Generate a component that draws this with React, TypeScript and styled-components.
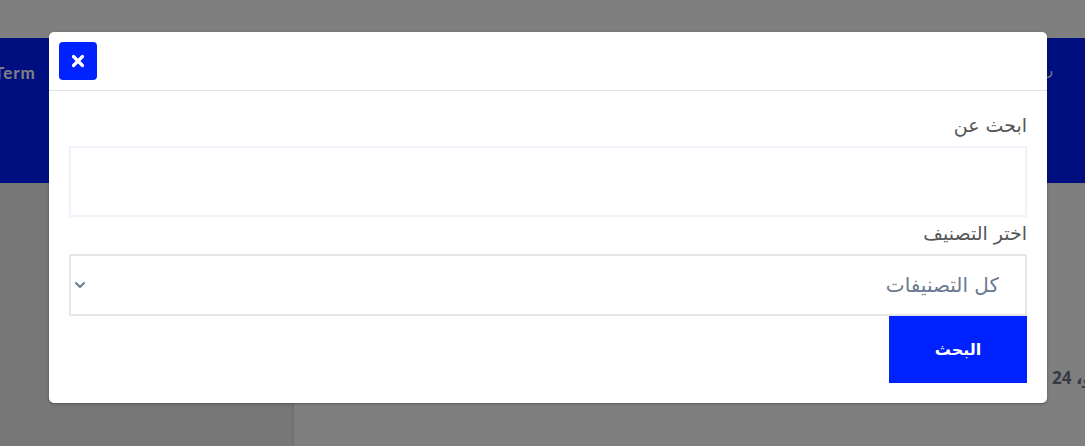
import React from 'react';
import styled, { createGlobalStyle } from 'styled-components';

const GlobalStyle = createGlobalStyle`
  html, body { margin: 0; padding: 0; }
  body {
    width: 1085px;
    height: 446px;
    overflow: hidden;
    font-family: "DejaVu Sans", "Noto Sans", sans-serif;
    background: #fff;
  }
`;

const Page = styled.div`
  position: relative;
  width: 1085px;
  height: 446px;
  overflow: hidden;
`;

const TopStrip = styled.div`
  height: 38px;
  background: #fff;
`;

const Band = styled.div`
  height: 145px;
  background: #001eff;
  display: flex;
  justify-content: space-between;
  padding-top: 24px;
  box-sizing: border-box;
`;

const BandText = styled.span`
  font-family: Lato, "Liberation Sans", sans-serif;
  font-weight: 700;
  font-size: 17px;
  letter-spacing: 1px;
  color: #fff;
  margin-left: -6px;
`;

const BandMark = styled.span`
  font-size: 14px;
  color: #fff;
  margin-right: 32px;
`;

const Content = styled.div`
  display: flex;
  height: 263px;
`;

const Sidebar = styled.div`
  width: 292px;
  background: #eeeeee;
  border-right: 2px solid #e2e2e2;
`;

const Main = styled.div`
  flex: 1;
  display: flex;
  justify-content: flex-end;
  padding-top: 183px;
  box-sizing: border-box;
`;

const MainText = styled.span`
  font-family: "Open Sans", "DejaVu Sans", sans-serif;
  font-weight: 700;
  font-size: 17px;
  color: #6a7690;
  margin-right: -8px;
`;

const Overlay = styled.div`
  position: absolute;
  inset: 0;
  background: rgba(0, 0, 0, 0.5);
`;

const Modal = styled.div`
  position: absolute;
  top: 32px;
  left: 49px;
  width: 998px;
  background: #fff;
  border-radius: 5px;
  box-shadow: 0 1px 3px rgba(0, 0, 0, 0.3);
`;

const ModalHeader = styled.div`
  height: 59px;
  padding: 10px;
  box-sizing: border-box;
  border-bottom: 1px solid #dee2e6;
  display: flex;
  align-items: center;
`;

const CloseButton = styled.button`
  width: 38px;
  height: 38px;
  border: none;
  border-radius: 4px;
  background: #0022ff;
  display: flex;
  align-items: center;
  justify-content: center;
  padding: 0;
  cursor: pointer;
`;

const ModalBody = styled.form`
  direction: rtl;
  padding: 20px 20px 20px;
  display: flex;
  flex-direction: column;
  align-items: stretch;
`;

const Label = styled.label`
  font-size: 19px;
  line-height: 29px;
  color: #555;
  margin-bottom: 6px;
  text-align: right;
`;

const TextInput = styled.input`
  height: 71px;
  box-sizing: border-box;
  border: 2px solid #eef2fb;
  outline: none;
  font-size: 18px;
  padding: 0 20px;
  margin: 0 0 2px;
  direction: rtl;
`;

const SelectWrap = styled.div`
  position: relative;
  height: 62px;
`;

const Select = styled.select`
  width: 100%;
  height: 62px;
  box-sizing: border-box;
  border: 2px solid #e6e6e6;
  border-radius: 0;
  background: #fff;
  appearance: none;
  outline: none;
  font-family: "DejaVu Sans", "Noto Sans", sans-serif;
  font-size: 20px;
  color: #6b7a90;
  padding: 0 26px 0 40px;
  direction: rtl;
`;

const Chevron = styled.svg`
  position: absolute;
  left: 5px;
  top: 27px;
  pointer-events: none;
`;

const SubmitButton = styled.button`
  align-self: flex-start;
  width: 138px;
  height: 67px;
  border: none;
  border-radius: 0;
  background: #0022ff;
  color: #fff;
  font-family: "DejaVu Sans", "Noto Sans", sans-serif;
  font-weight: 700;
  font-size: 16px;
  cursor: pointer;
`;

export default function App() {
  return (
    <>
      <GlobalStyle />
      <Page>
        <TopStrip />
        <Band>
          <BandText>Term</BandText>
          <BandMark>ر</BandMark>
        </Band>
        <Content>
          <Sidebar />
          <Main>
            <MainText>24 ،و</MainText>
          </Main>
        </Content>
        <Overlay />
        <Modal>
          <ModalHeader>
            <CloseButton type="button" aria-label="close">
              <svg width="14" height="14" viewBox="0 0 14 14">
                <path d="M2.5 2.5 L11.5 11.5 M11.5 2.5 L2.5 11.5" stroke="#fff" strokeWidth="3.2" strokeLinecap="round" />
              </svg>
            </CloseButton>
          </ModalHeader>
          <ModalBody onSubmit={e => e.preventDefault()}>
            <Label htmlFor="q">ابحث عن</Label>
            <TextInput id="q" type="text" />
            <Label htmlFor="cat">اختر التصنيف</Label>
            <SelectWrap>
              <Select id="cat" defaultValue="all">
                <option value="all">كل التصنيفات</option>
              </Select>
              <Chevron width="12" height="8" viewBox="0 0 12 8">
                <path d="M1.5 1.5 L6 6 L10.5 1.5" fill="none" stroke="#6b7a90" strokeWidth="2" />
              </Chevron>
            </SelectWrap>
            <SubmitButton type="submit">البحث</SubmitButton>
          </ModalBody>
        </Modal>
      </Page>
    </>
  );
}
